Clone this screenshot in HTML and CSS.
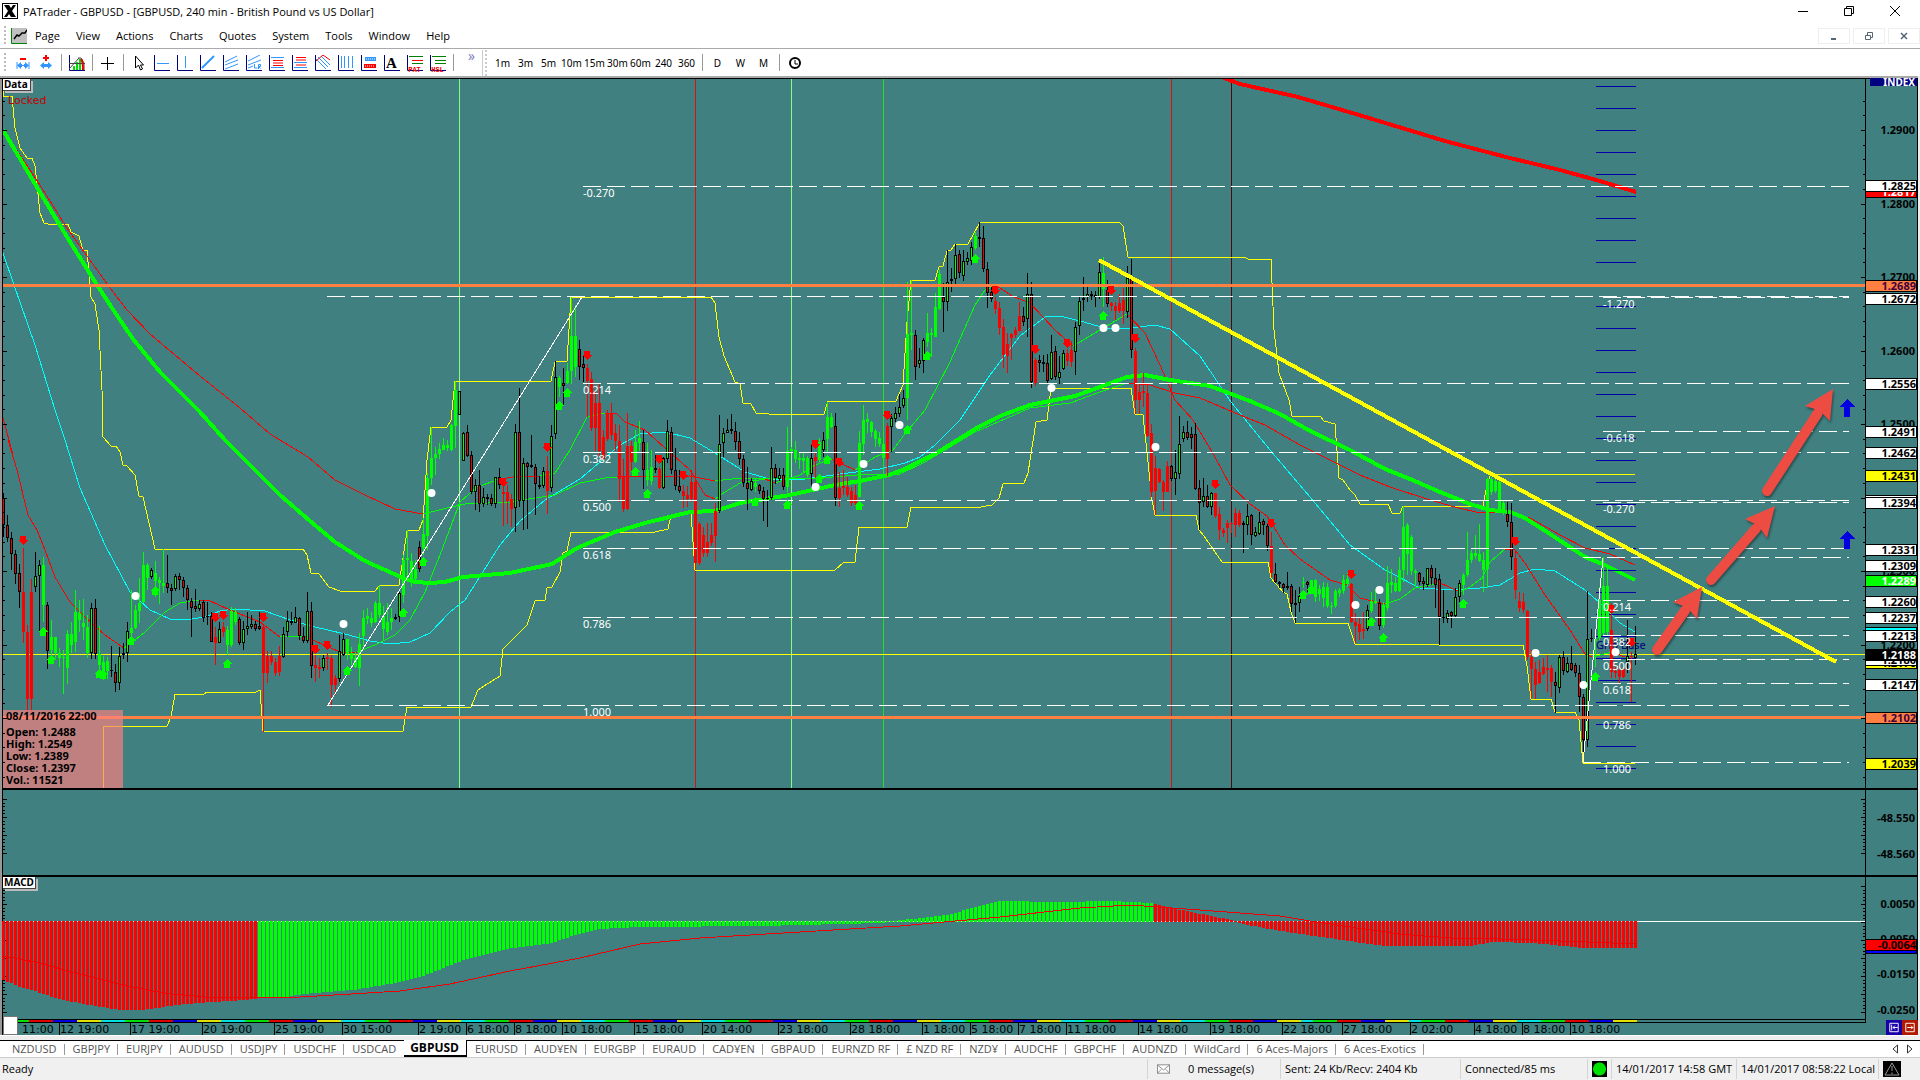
FILE: index.html
```
<!DOCTYPE html>
<html lang="en">
<head>
<meta charset="utf-8">
<title>PATrader - GBPUSD</title>
<link rel="stylesheet" href="styles.css">
</head>
<body>
<div class="app">
  <header class="titlebar">
    <svg class="logo" viewBox="0 0 16 16"><rect x=".5" y=".5" width="15" height="15" fill="#fff" stroke="#000"/><path d="M2 2h5l2 3 2-3h3l-4 6 4 6H9L7 11l-2 3H2l4-6z" fill="#000"/></svg>
    <h1 class="title">PATrader - GBPUSD - [GBPUSD, 240 min - British Pound vs US Dollar]</h1>
    <div class="window-buttons">
      <button class="win" aria-label="Minimize"><svg viewBox="0 0 12 12"><path d="M1 6.500h10"/></svg></button>
      <button class="win" aria-label="Restore"><svg viewBox="0 0 12 12"><path d="M1.500 3.500h7v7h-7zM3.500 3.500v-2h7v7h-2"/></svg></button>
      <button class="win" aria-label="Close"><svg viewBox="0 0 12 12"><path d="M1 1l10 10M11 1L1 11"/></svg></button>
    </div>
  </header>
  <nav class="menubar">
    <span class="grip"></span>
    <svg class="menu-icon" viewBox="0 0 16 16"><rect width="16" height="15" fill="#c0c0c0"/><path d="M.5 0v15.500H16" stroke="#008000" fill="none"/><path d="M3 11l3-4 2 1 3-3 3 0 2-3" stroke="#000" fill="none" stroke-width="1.500"/></svg>
    <button>Page</button><button>View</button><button>Actions</button><button>Charts</button><button>Quotes</button><button>System</button><button>Tools</button><button>Window</button><button>Help</button>
    <div class="mdi-buttons">
      <button aria-label="Minimize chart"><svg viewBox="0 0 10 10"><path d="M2 8h5" stroke-width="2"/></svg></button>
      <button aria-label="Restore chart"><svg viewBox="0 0 10 10"><path d="M1.500 4.500h5v4h-5zM3.500 4V1.500h5v5H7"/></svg></button>
      <button aria-label="Close chart"><svg viewBox="0 0 10 10"><path d="M2 2l6 6M8 2L2 8" stroke-width="1.500"/></svg></button>
    </div>
  </nav>
  <div class="toolbar">
    <span class="grip"></span>
    <button class="tool" aria-label="Zoom out"><svg viewBox="0 0 16 16"><path d="M5 4h6" stroke="#f00" stroke-width="2"/><path d="M2 10.500L6 7v2h1v3H6v2zM14 10.500L10 7v2H9v3h1v2z" fill="#3296ff"/><path d="M2 7v7M14 7v7M7 10.500h2" stroke="#3296ff"/></svg></button>
    <button class="tool" aria-label="Zoom in"><svg viewBox="0 0 16 16"><path d="M5 3h6M8 0v6" stroke="#f00" stroke-width="2"/><path d="M2 10.500L6 7v2h4V7l4 3.500L10 14v-2H6v2z" fill="#3296ff"/></svg></button>
    <span class="sep"></span>
    <button class="tool" aria-label="Profile"><svg viewBox="0 0 16 16"><path d="M.5 0v15.500H16" stroke="#000080" fill="none"/><path d="M4 15v-4h2v4zM7 15V7h2v8zM10 15V4h2v11z" fill="#00e000"/><path d="M0 14l10-11M0 8.500h16" stroke="#444" fill="none"/><path d="M9 3h3l3 5v7" stroke="#444" fill="none"/><path d="M12 4q2 2 2 11" stroke="#e00" fill="none" stroke-width="2"/></svg></button>
    <span class="sep"></span>
    <button class="tool" aria-label="Crosshair"><svg viewBox="0 0 16 16"><path d="M1 8.500h13M7.500 2v13" stroke="#000"/></svg></button>
    <span class="sep"></span>
    <button class="tool" aria-label="Select"><svg viewBox="0 0 16 16"><path d="M4.500 1v12l3-3 2 5 2-1-2-4h3z" fill="#fff" stroke="#000"/></svg></button>
    <button class="tool" aria-label="Horizontal line"><svg viewBox="0 0 16 16"><path class="ax" d="M.5 0v15.500H16"/><path class="bl" d="M3 8.500h12"/></svg></button>
    <button class="tool" aria-label="Vertical line"><svg viewBox="0 0 16 16"><path class="ax" d="M.5 0v15.500H16"/><path class="bl" d="M8.500 1v12"/></svg></button>
    <button class="tool" aria-label="Trend line"><svg viewBox="0 0 16 16"><path class="ax" d="M.5 0v15.500H16"/><path class="bl" d="M2 13L14 1" stroke-width="2"/></svg></button>
    <button class="tool" aria-label="Channel"><svg viewBox="0 0 16 16"><path class="ax" d="M.5 0v15.500H16"/><path class="bl" d="M2 7l12-6M2 10l13-5M2 14l13-5"/></svg></button>
    <button class="tool" aria-label="Regression"><svg viewBox="0 0 16 16"><path class="ax" d="M.5 0v15.500H16"/><path class="bl" d="M2 6l12-6M2 10l13-5M2 13l5-2M8.500 9v4h3M12.500 14V9.500h2v2h-2l2 2"/></svg></button>
    <button class="tool" aria-label="Retracement"><svg viewBox="0 0 16 16"><path class="ax" d="M.5 0v15.500H16"/><path class="bl" d="M2 2.500h13M2 12.500h13"/><path d="M4 5.500h10M4 8h10M4 10.500h10" stroke="#f00"/></svg></button>
    <button class="tool" aria-label="Extension"><svg viewBox="0 0 16 16"><path class="ax" d="M.5 0v15.500H16"/><path class="bl" d="M2 7.500h13M2 12.500h13"/><path d="M4 2.500h10M4 5h10M4 10h10" stroke="#f00"/></svg></button>
    <button class="tool" aria-label="Fan"><svg viewBox="0 0 16 16"><path class="ax" d="M.5 0v15.500H16"/><path class="bl" d="M1 4l10 10M3 2l10 10M6 1l9 9"/><path d="M1 6l7-6 7 5" stroke="#f00" fill="none"/></svg></button>
    <button class="tool" aria-label="Time zones"><svg viewBox="0 0 16 16"><path class="ax" d="M.5 0v15.500H16"/><path class="bl" d="M3.500 1v12M6.500 1v12M10.500 1v12M14.500 1v12"/></svg></button>
    <button class="tool" aria-label="Zones"><svg viewBox="0 0 16 16"><path class="ax" d="M.5 0v15.500H16"/><rect x="4" y="2" width="11" height="4" fill="#3296ff"/><rect x="3" y="9" width="12" height="4" fill="#f00"/><path d="M4 11h10M5 4h9" stroke="#fff" stroke-dasharray="1 1"/></svg></button>
    <button class="tool" aria-label="Text"><svg viewBox="0 0 16 16"><path class="ax" d="M.5 0v15.500H16"/></svg><b class="letter">A</b></button>
    <button class="tool" aria-label="Pattern"><svg viewBox="0 0 16 16"><path class="ax" d="M.5 0v15.500H16"/><path d="M2 1.500h14M5 8.500h11" stroke="#008000"/><path d="M5 5.500h11" stroke="#f00"/></svg><span class="tiny">PAT</span></button>
    <button class="tool" aria-label="Swing"><svg viewBox="0 0 16 16"><path class="ax" d="M.5 0v15.500H16"/><path d="M2 1.500h14M5 5.500h11M5 8.500h11" stroke="#008000"/></svg><span class="tiny">HSL</span></button>
    <span class="sep"></span>
    <button class="more" aria-label="More">»</button>
    <span class="grip tall"></span>
    <button class="tool">1m</button><button class="tool">3m</button><button class="tool">5m</button><button class="tool">10m</button><button class="tool">15m</button><button class="tool">30m</button><button class="tool">60m</button><button class="tool">240</button><button class="tool">360</button>
    <span class="sep"></span>
    <button class="tool">D</button><button class="tool">W</button><button class="tool">M</button>
    <span class="sep"></span>
    <button class="tool" aria-label="Clock"><svg viewBox="0 0 16 16"><circle cx="8" cy="8" r="5" fill="none" stroke="#000" stroke-width="2"/><path d="M8 5v4h3" fill="none" stroke="#000"/></svg></button>
  </div>
  <main class="workspace">
    <svg class="chart" id="chart" viewBox="0 76 1920 960" role="img" aria-label="GBPUSD 240 minute chart"></svg>
    <div class="nav-buttons">
      <button class="nav-blue" aria-label="Scroll to start"><svg viewBox="0 0 16 16"><path d="M3.500 3.500h9v9h-9zM5.500 5v6M12 8H7l2-2M7 8l2 2"/></svg></button>
      <button class="nav-red" aria-label="Scroll to end"><svg viewBox="0 0 16 16"><path d="M3.500 3.500h9v9h-9zM5 8h6L9 6M11 8l-2 2"/></svg></button>
    </div>
  </main>
  <nav class="tabs">
    <a href="#">NZDUSD</a><a href="#">GBPJPY</a><a href="#">EURJPY</a><a href="#">AUDUSD</a><a href="#">USDJPY</a><a href="#">USDCHF</a><a href="#" class="last">USDCAD</a><a href="#" class="active">GBPUSD</a><a href="#">EURUSD</a><a href="#">AUD¥EN</a><a href="#">EURGBP</a><a href="#">EURAUD</a><a href="#">CAD¥EN</a><a href="#">GBPAUD</a><a href="#">EURNZD RF</a><a href="#">£ NZD RF</a><a href="#">NZD¥</a><a href="#">AUDCHF</a><a href="#">GBPCHF</a><a href="#">AUDNZD</a><a href="#">WildCard</a><a href="#">6 Aces-Majors</a><a href="#">6 Aces-Exotics</a>
    <div class="tab-scroll"><button aria-label="Scroll tabs left"><svg viewBox="0 0 6 10"><path d="M5.500 1v8L1 5z"/></svg></button><button aria-label="Scroll tabs right"><svg viewBox="0 0 6 10"><path d="M.5 1v8L5 5z"/></svg></button></div>
  </nav>
  <footer class="status">
    <span class="ready">Ready</span>
    <span class="cell messages"><svg viewBox="0 0 14 10"><rect x=".5" y=".5" width="13" height="9" fill="#fff" stroke="#888"/><path d="M1 1l6 5 6-5M1 9l4-4M13 9L9 5" fill="none" stroke="#888"/></svg>0 message(s)</span>
    <span class="cell sent">Sent: 24 Kb/Recv: 2404 Kb</span>
    <span class="cell conn">Connected/85 ms</span>
    <span class="cell lamp"><i></i></span>
    <span class="cell gmt">14/01/2017 14:58 GMT</span>
    <span class="cell local">14/01/2017 08:58:22 Local</span>
    <span class="cell warn"><svg viewBox="0 0 18 16"><rect width="18" height="16" fill="#000"/><path d="M9 2l7 12H2zM9 5v5M9 11.500v1.500" fill="none" stroke="#999"/></svg></span>
  </footer>
</div>
<script src="script.js"></script>
</body>
</html>
```
FILE: styles.css
```
* { box-sizing: border-box; }
body { margin: 0; background: #fff; color: #000; font: 11px/16px "Open Sans", "Noto Sans", sans-serif; }
button { border: 0; background: none; padding: 0; font: inherit; color: inherit; }
svg { display: block; }
.app { display: flex; flex-direction: column; min-height: 100vh; }
.titlebar { display: flex; align-items: center; height: 22px; padding: 0 2px; }
.logo { width: 16px; height: 16px; margin-right: 5px; }
.title { margin: 0; font-size: 11px; font-weight: 400; line-height: 20px; padding-top: 2px; }
.window-buttons { display: flex; margin-left: auto; }
.win { display: grid; place-items: center; width: 46px; height: 22px; }
.win svg { width: 12px; height: 12px; fill: none; stroke: #000; }
.menubar { display: flex; align-items: center; height: 26px; padding: 2px 0 0 4px; gap: 16px; }
.grip { width: 2px; height: 20px; margin-right: 5px; background: repeating-linear-gradient(#bbb 0 2px, transparent 2px 4px); }
.menubar .grip { margin-right: -11px; }
.menu-icon { width: 16px; height: 16px; margin-right: -8px; }
.mdi-buttons { display: flex; margin-left: auto; gap: 3px; }
.mdi-buttons button { display: grid; place-items: center; width: 32px; height: 16px; border: 1px solid #eee; }
.mdi-buttons svg { width: 10px; height: 10px; fill: none; stroke: #567; }
.toolbar { display: flex; align-items: center; height: 28px; padding-left: 4px; border-top: 1px solid #aaa; }
.tool { display: grid; place-items: center; width: 23px; height: 24px; font: 10px/14px "Noto Sans", sans-serif; }
.tool svg { width: 16px; height: 16px; grid-area: 1 / 1; }
.ax { fill: none; stroke: #000080; }
.bl { fill: none; stroke: #3296ff; }
.letter, .tiny { grid-area: 1 / 1; }
.letter { font: bold 15px/16px "Liberation Serif", serif; }
.tiny { align-self: end; font: bold 7px/9px "Liberation Mono", monospace; color: #e00; }
.sep { width: 1px; height: 17px; margin: 0 3px 0 4px; background: #999; }
.more { width: 23px; margin-left: 3px; align-self: start; color: #77b; font-size: 14px; line-height: 14px; }
.grip.tall { height: 26px; border-left: 1px solid #ccc; width: 5px; margin: 0 4px 0 -1px; background: repeating-linear-gradient(#ccc 0 2px, transparent 2px 4px) right / 2px 100% no-repeat; }
.workspace { position: relative; }
.chart { width: 100%; height: auto; background: #408080; }
.chart text { font-family: "Noto Sans", sans-serif; font-size: 11px; white-space: pre; }
.chart .bold { font-weight: 700; }
.chart text.small { font-size: 10px; font-weight: 700; }
.chart .time { font-family: "DejaVu Sans", sans-serif; }
.chart .crisp { shape-rendering: crispEdges; }
.nav-buttons { position: absolute; right: 2px; bottom: 1px; display: flex; }
.nav-buttons button { width: 16px; height: 15px; }
.nav-buttons svg { width: 16px; height: 15px; fill: none; stroke: #fff; }
.nav-blue { background: #1800a8; }
.nav-red { background: #b01800; }
.tabs { display: flex; height: 22px; padding: 5px 0 0 4px; border-bottom: 1px solid #ccc; background: linear-gradient(#eee 0 4px, #000 4px 5px, #fff 5px); }
.tabs a { position: relative; padding: 0 8px; color: #555; text-decoration: none; white-space: nowrap; }
.tabs a::after { content: ""; position: absolute; right: 0; top: 3px; height: 11px; border-right: 1px solid #999; }
.tabs .last::after, .tabs .active::after { display: none; }
.tabs .active { margin-top: -1px; border: solid #000; border-width: 0 1px 2px 0; padding: 1px 7px 0 6px; line-height: 14px; background: #fff; color: #000; font-size: 12px; font-weight: 700; }
.tab-scroll { display: flex; gap: 9px; margin-left: auto; padding-right: 7px; }
.tab-scroll svg { width: 6px; height: 10px; fill: none; stroke: #333; }
.status { display: flex; align-items: center; flex: 1; min-height: 22px; padding: 0 19px 0 2px; background: #f0f0f0; line-height: 20px; }
.ready { flex: 1; }
.cell { display: flex; align-items: center; height: 20px; padding: 0 4px; border-left: 1px solid #d4d4d4; white-space: nowrap; }
.messages { width: 133px; gap: 18px; padding-left: 9px; }
.messages svg { width: 13px; height: 10px; }
.sent { width: 180px; }
.conn { width: 127px; }
.lamp { width: 24px; }
.gmt { width: 125px; }
.local { width: 142px; }
.lamp i { width: 17px; height: 16px; background: radial-gradient(circle, #00e000 0 6px, #000 7px); }
.warn svg { width: 18px; height: 16px; }
.warn { padding-right: 0; }
```
FILE: script.js
```
const chart = document.getElementById('chart');
const out = [];
const rect = (x, y, w, h, fill, extra = '') => out.push(`<rect x="${x}" y="${y}" width="${w}" height="${h}" fill="${fill}" ${extra}/>`);
const text = (x, y, s, fill, cls = '', anchor = 'start') => out.push(`<text x="${x}" y="${y}" fill="${fill}" class="${cls}" text-anchor="${anchor}">${s}</text>`);
const poly = (pts, stroke, w = 1, extra = '') => out.push(`<polyline points="${pts}" fill="none" stroke="${stroke}" stroke-width="${w}" ${extra}/>`);

// Bars: kind, high, body top, body bottom, low, in thirds of a pixel below the base.
// G/R are outlined up/down bars, g/r are solid trend bars.
const sessions = [
{ base: 440, first: 0, bars: `R 160 175 255 290;R 225 255 295 305;R 275 295 343 390;R 330 343 403 432;R 372 400 457 503;r 325 457 575 610;r 555 575 776 820;r 417 455 778 820;G 335 408 440 455;G 360 376 408 572;g 350 376 495 545;R 487 495 633 687;g 540 592 630 650;g 590 592 640 655;g 625 640 655 680;g 630 650 655 762;g 570 582 684 732;g 545 582 614 640;g 450 515 607 635;g 480 520 540 575;g 478 548 562 600;g 525 560 640 655;G 490 503 638 657;R 477 503 643 657;g 558 642 675 700;g 648 665 718 720;g 650 664 694 718;R 618 690 694 712;R 672 696 728 755;G 620 648 728 750;G 610 638 646 657;G 545 573 640 665;g 450 563 578 600;g 495 510 563 568;g 415 488 512 548;g 337 375 487 490;g 368 375 415 450;G 383 391 410 418;g 362 400 424 470;g 410 420 430 492;g 328 428 438 460;R 345 430 445 460;R 433 443 452 495;G 402 408 448 452;R 398 408 420 450;R 410 420 443 470;R 434 443 480 510;R 475 482 503 590;R 447 497 508 515;G 480 492 508 512;R 480 487 535 545;G 485 527 532 555;R 515 527 605 605;r 560 590 610 675;G 545 568 608 610;r 545 562 575 590;g 558 570 614 645;g 500 513 614 620;g 505 517 545 555;R 530 537 608 615;G 542 568 608 630;G 515 558 568 585;G 525 553 562 568;R 543 553 568 572;R 515 558 567 570;r 555 560 700 875;r 632 648 698 730;r 632 648 667 675;r 655 665 698 707;r 617 648 697 707;G 562 582 652 655;G 512 542 577 592;G 517 542 550 555;G 500 530 548 550;R 530 533 587 600;R 560 588 603 610;G 455 512 602 610;R 487 512 677 715;r 645 675 685 725;r 655 680 687 715;G 645 655 683 692;r 640 650 658 690;r 645 655 735 800;r 705 713 735 765;G 585 633 717 725;G 580 598 645 648;g 597 598 642 660;g 620 640 657 675;g 635 655 680 685;g 580 612 684 738;g 510 535 587 617;g 505 528 537 552;g 515 533 550 560;g 483 490 547 550;g 435 490 525 535;g 498 527 567 600;g 490 545 577 585;g 505 535 545 570;R 522 530 537 540;G 455 458 530 545;g 345 360 465 490;g 270 355 360 415;g 340 362 420 440;g 360 388 418 430;R 303 320 388 395;g 235 282 323 345;g 100 115 287 330;g -40 55 115 135;g 20 42 55 105;g 10 28 42 58;g -5 15 30 30;g 0 15 25 33;g -48 -46 29 32;g -176 -151 -43 24;G -146 -146 -76 -76;G -24 -20 62 62;R -46 -23 48 52` },
{ base: 240, first: 117, bars: `R 632 645 757 762;G 718 735 757 810;R 690 735 793 817;G 745 772 793 800;R 762 772 778 795;R 762 775 793 797;G 710 712 793 803;R 685 712 735 747;r 740 755 762 857;r 735 755 783 853;r 762 778 808 860;G 553 577 803 875;R 445 577 783 800;G 655 670 783 870;R 665 670 680 867;R 585 675 682 685;R 672 680 732 825;R 708 735 740 747;G 680 693 738 743;r 648 693 752 822;G 555 587 745 757;G 363 412 583 597;g 408 414 442 470;R 385 430 437 495;g 370 393 430 433;g 172 288 392 433;g 195 288 380 410;R 300 328 382 420;R 345 373 385 427;r 372 383 422 530;r 395 418 563 572;r 453 490 563 633;r 428 490 633 650;r 570 592 657 663;r 510 520 598 602;r 490 520 585 600;r 553 580 603 632;r 555 603 717 785;r 657 710 808 817;r 518 618 808 810;r 603 617 665 697;g 570 605 665 668;g 543 595 608 633;R 570 605 690 747;g 610 690 720 737;g 630 680 722 735;R 645 683 690 700;r 680 688 745 747;G 650 655 745 747;G 540 573 658 668;R 562 577 690 702;R 625 690 738 750;R 690 738 753 758;r 735 752 768 803;r 738 765 778 800;r 690 727 777 785;r 700 727 970 975;r 845 853 970 975;r 860 885 938 950;r 850 905 940 950;r 850 885 908 918;r 790 812 887 965;G 525 612 812 820;G 565 578 610 652;G 537 570 578 580;R 523 568 573 582;R 545 573 605 630;R 575 603 658 675;R 645 658 728 740;R 682 728 748 810;G 715 722 750 752;g 718 730 742 757;R 733 735 753 762;R 742 752 778 843;R 750 775 778 860;G 622 685 775 780;R 672 685 715 732;G 685 705 717 722;R 683 705 742 750;g 560 632 740 757;g 620 627 633 640;g 603 630 658 670;g 635 655 660 687;g 640 655 662 695;g 648 655 705 712;G 615 655 703 742;r 640 650 663 717;g 595 605 660 665;G 577 600 630 652;g 485 530 597 635;g 520 530 560 565;R 518 558 773 797;r 695 743 775 800;r 690 737 745 765;r 710 740 765 770;r 740 753 790 797;r 735 765 790 795;g 573 608 770 770;g 495 540 612 645;g 520 537 545 580;g 542 545 575 590;g 567 573 598 620;g 575 595 613 622;g 572 612 655 670` },
{ base: 200, first: 221, bars: `r 668 678 776 827;G 643 655 682 757;G 620 640 658 665;G 582 620 643 650;G 570 595 618 625;g 245 402 593 660;g 240 400 406 450;R 390 405 500 540;G 445 480 493 505;G 415 420 482 518;g 340 400 425 440;g 385 400 405 470;g 280 322 410 410;g 210 222 328 330;R 250 290 307 395;G 150 247 307 333;R 205 238 243 275;G 133 165 238 252;R 150 163 220 233;G 150 183 228 243;G 155 175 185 195;G 125 142 183 195;g 95 107 143 150;R 67 112 117 140;R 78 115 207 215;R 185 208 280 323;R 262 275 298 307;r 292 302 327 343;r 307 323 383 405;r 357 382 465 503;r 400 433 467 520;r 400 403 413 480;r 382 390 405 415;r 307 348 392 393;R 322 348 365 378;G 220 283 358 412;R 247 283 547 563;r 475 480 550 557;R 465 480 490 517;R 465 487 491 515;R 462 490 542 548;G 405 455 538 540;R 438 452 532 540;G 467 517 535 553;G 450 460 507 510;r 447 460 483 497;r 423 450 485 500;G 367 380 455 525;G 290 302 377 405;R 232 295 300 333;G 258 283 292 305;R 273 283 289 300;R 273 285 290 322;G 180 217 290 297;g 170 220 268 322;R 240 270 313 320;r 305 308 318 333;r 307 318 333 360;r 283 308 333 340;r 263 300 332 372;G 198 233 335 355;R 178 233 450 475;r 445 453 600 643;r 550 575 600 643;r 520 572 580 620;r 550 580 707 712;r 672 698 875 890;r 768 803 873 945;r 803 808 845 850;r 840 847 875 932;r 782 797 875 877;R 795 798 838 843;G 750 817 838 885;G 648 732 822 837;G 677 695 717 725;R 663 695 715 720;R 680 703 715 748;R 670 703 868 870;R 840 865 910 990;G 833 888 907 922;R 855 888 922 925;G 875 880 922 945;r 878 880 948 955;r 920 942 990 1020;r 985 990 1000 1010;r 960 968 985 1030;r 965 970 973 1000;r 925 940 975 1010;r 930 938 975 980` },
{ base: 400, first: 310, bars: `R 363 370 376 460;G 312 348 375 405;R 343 346 405 435;G 380 395 407 412;G 337 365 403 405;R 357 363 375 405;R 370 378 437 452;r 395 438 520 530;R 488 523 547 550;R 543 547 553 565;R 550 553 563 580;G 517 557 563 570;R 553 558 612 637;R 570 610 615 670;G 560 588 608 635;g 530 545 550 565;R 543 547 555 575;g 540 540 570 575;g 538 540 590 605;g 555 568 582 603;g 545 562 593 620;g 550 562 618 625;g 605 617 622 642;g 567 573 618 625;g 563 570 580 590;g 525 540 573 582;g 518 538 553 560;r 550 552 665 670;r 640 667 677 730;r 655 672 695 720;r 635 688 693 717;G 615 630 688 692;g 575 603 632 640;g 567 602 610 612;R 597 610 677 690;g 605 615 675 685;g 497 548 623 632;g 507 545 555 580;g 530 548 573 577;g 470 510 572 575;g 318 380 510 545;g 370 375 462 525;g 405 410 512 525;g 507 512 520 558;R 517 520 545 555;R 530 543 553 570;G 503 505 555 560;R 495 505 535 555;R 505 535 555 625;R 523 538 650 735;R 570 650 653 668;G 630 638 657 668;R 632 637 647 685;G 563 590 647 650;G 540 550 590 605;g 518 525 555 585;g 395 480 525 530;g 450 460 480 490;g 405 460 467 477;g 372 462 482 485;g 455 480 510 577;g 233 237 508 565;g 230 237 275 285;g 233 243 272 278;g 240 245 327 335;g 300 310 340 345;R 307 343 367 380;R 310 367 472 510;r 452 473 570 597;r 575 603 623 635;r 580 605 630 638;r 630 632 772 780;r 750 772 808 895;r 785 808 855 897;r 780 815 850 852;r 775 802 822 825;r 765 805 810 875;r 795 805 847 890;R 815 847 858 938;G 765 772 863 878;R 752 770 812 825;G 770 788 815 818;R 738 790 810 812;R 788 795 820 830;R 795 820 890 935;R 882 892 1020 1075;G 573 718 1020 1042;R 688 713 717 725;g 710 718 722 800;g 560 600 715 720;g 470 558 700 705;g 500 558 697 705;r 610 690 815 835;r 800 812 820 835;r 795 810 832 850;r 800 808 832 835;G 660 767 785 820;r 755 768 772 905;G 678 763 773 795` }
];

// Frame
rect(0, 76, 1920, 960, '#408080');
rect(0, 76, 2, 960, '#999'); rect(2, 78, 1, 958, '#000');
rect(0, 76, 1920, 2, '#aaa'); rect(0, 78, 1918, 1, '#000');
rect(1917, 78, 1, 958, '#000'); rect(1918, 76, 2, 960, '#eee');

out.push('<defs><clipPath id="plot"><rect x="3" y="79" width="1862" height="709"/></clipPath></defs>');
out.push('<g clip-path="url(#plot)" class="crisp">');
[[459, '#80ff80'], [695, '#d81010'], [791, '#80ff80'], [883, '#20e020'], [1171, '#d81010'], [1231, '#500808']].forEach(([x, c]) => rect(x, 79, 1, 709, c));
rect(3, 654, 1862, 1, '#ff0');

// Moving averages and channel
const yellow = '#ff0', lime = '#0f0', red = '#f00';
poly('3,90 3,96 12,96 15,128 20,148 27,158 32,158 35,166 37,184 40,213 44,223 48,224 68,224 71,232 79,236 83,250 87,250 91,297 95,304 99,330 102,390 103,437 111,446 116,446 120,452 123,465 127,466 135,475 139,496 143,497 155,549 303,549 307,555 311,573 319,574 329,587 340,591 375,591 379,586 399,585 407,531 419,530 423,520 427,460 431,427 447,427 451,420 455,381 551,381 555,362 567,361 571,297 711,297 715,303 719,337 724,356 735,382 740,384 743,403 751,404 756,413 769,414 824,414 828,401 896,401 903,385 907,322 911,280 935,280 939,267 943,266 947,251 951,250 955,244 968,244 973,235 980,222 1119,222 1123,226 1128,257 1244,257 1248,259 1271,259 1274,330 1279,373 1289,400 1292,416 1320,416 1324,421 1335,424 1339,478 1343,480 1350,490 1355,495 1360,504 1388,504 1392,513 1400,513 1403,506 1483,506 1487,485 1490,476 1500,474 1635,474', yellow);
poly('103,788 103,726 167,726 171,717 175,694 204,694 207,692 256,692 260,690 263,731 403,731 407,707 471,707 478,690 484,686 500,676 503,649 527,625 535,601 545,600 547,588 552,587 560,572 563,553 567,551 571,532 655,532 668,529 671,515 691,513 695,570 835,570 843,563 855,562 859,527 907,527 911,507 981,507 992,505 999,498 1003,484 1024,483 1028,473 1036,422 1047,420 1051,388 1131,388 1135,414 1143,415 1152,500 1155,515 1196,515 1199,530 1204,536 1222,562 1268,562 1271,578 1283,592 1287,594 1291,612 1295,623 1348,623 1355,644 1438,644 1439,645 1523,645 1527,666 1531,699 1551,699 1555,712 1575,712 1579,720 1583,763 1635,763', yellow);
poly('3,253 14,285 35,345 55,410 65,440 80,488 105,545 130,592 150,610 170,619 185,620 205,617 220,611 235,609 265,611 290,620 315,627 345,634 370,641 390,644 410,642 430,633 450,612 465,600 500,545 520,521 545,500 580,479 600,462 620,445 640,434 665,432 690,438 715,453 745,472 770,479 805,479 840,474 880,469 905,463 920,457 935,445 960,420 990,375 1020,336 1045,317 1060,316 1080,321 1105,328 1130,328 1155,325 1170,329 1200,356 1231,402 1270,450 1310,497 1350,545 1385,570 1420,588 1450,590 1480,588 1500,585 1520,573 1535,569 1555,571 1585,590 1600,603 1620,623 1635,632', '#0ff');
[[red, '8,440 17,470 28,515 37,530 45,550 55,577 70,602 85,617 105,635 124,648'], [lime, '124,648 131,643 145,632 165,612 180,603 199,600'], [red, '199,600 208,600 230,610 260,622 280,637'], [lime, '280,637 305,636'], [red, '305,636 315,641 340,652 357,652'], [lime, '357,652 375,645 395,635 410,620 425,592 440,555 460,502 477,487 500,479'], [red, '500,479 520,476 540,476'], [lime, '540,476 555,473 570,450 587,417 605,413'], [red, '605,413 617,414 625,422 645,430 665,448 690,470 705,495 715,499'], [lime, '715,499 725,492 740,483 765,479'], [red, '765,479 775,483'], [lime, '775,483 800,475 815,465 831,459'], [red, '831,459 855,470'], [lime, '855,470 875,457 893,450 904,435 925,410 950,362 975,305 985,290 992,287'], [red, '992,287 1000,288 1012,296 1030,303 1055,330 1073,346'], [lime, '1073,346 1100,330 1127,314'], [red, '1127,314 1145,333 1160,365 1175,400 1193,420 1215,457 1230,485 1250,504 1267,516 1285,545 1300,559 1330,580 1347,585 1360,598 1385,604'], [lime, '1385,604 1400,599 1415,588 1440,583'], [red, '1440,583 1460,592'], [lime, '1460,592 1470,587 1482,578 1490,562 1505,549'], [red, '1505,549 1515,550 1525,563 1545,595 1570,630 1585,654 1592,657'], [lime, '1592,657 1612,652'], [red, '1612,652 1625,657'],
[red, '3,418 13,455'], [red, '5,132 38,182 67,228 110,288 127,310 150,334 200,376 240,408 270,434 308,457 335,480 365,495 395,509 423,514'], [lime, '423,514 447,508 465,504 510,502 555,495 580,483 605,478 617,477'], [red, '617,477 690,476 715,481'], [lime, '715,481 740,478 820,478 870,474 900,474 925,462 975,432 1030,408 1070,403 1100,392 1127,383'], [red, '1127,383 1150,385 1175,393 1200,398 1240,415 1265,425 1300,445 1360,475 1390,487 1430,500 1455,507 1480,513 1500,512 1515,514 1530,518 1560,535 1585,548 1610,554 1635,565']].forEach(([c, p]) => poly(p, c));
poly('3,130 35,184 67,237 97,285 116,314 133,339 160,372 199,411 225,440 247,462 280,495 310,521 335,542 365,561 403,578 415,582 430,583 445,582 463,577 510,573 552,564 577,548 615,532 645,523 690,512 715,511 740,503 790,495 835,485 860,481 889,475 900,471 935,454 975,429 1000,416 1030,405 1075,396 1100,387 1127,377 1145,375 1170,380 1210,386 1250,401 1280,414 1310,431 1350,450 1385,469 1410,479 1440,492 1470,504 1490,510 1510,512 1525,518 1550,534 1585,557 1605,565 1635,580', lime, 4);
poly('1224,78 1240,84 1298,97 1359,115 1445,141 1506,157 1560,170 1600,181 1636,192', red, 4);

for (let y = 86; y < 780; y += 22) rect(1596, y, 40, 1, '#00a');
text(1596, 649, 'Grid Base', '#00007a');

for (const s of sessions) s.bars.split(';').forEach((bar, n) => {
  const [kind, ...v] = bar.split(' ');
  const [h, t, b, l] = v.map(d => Math.round(s.base + d / 3));
  const x = 3 + 4 * (s.first + n);
  const solid = kind === 'g' ? lime : kind === 'r' ? red : '#000';
  rect(x, h, 1, Math.max(1, l - h), solid);
  rect(x - 1, t, 3, Math.max(1, b - t), solid);
  if (solid === '#000' && b - t > 2) rect(x, t + 1, 1, b - t - 2, kind === 'G' ? lime : '#f00000');
});

// Retracement levels
[[186, 583], [296, 327], [383, 583], [452, 583], [500, 583], [548, 583], [617, 583], [705, 327], [297, 1603], [431, 1603], [502, 1603], [557, 1583], [600, 1603], [635, 1603], [659, 1603], [683, 1603], [762, 1583]].forEach(([y, x]) => poly(`${x},${y}.5 1849,${y}.5`, '#fff', 1, 'stroke-dasharray="18 6"'));
poly('328,705 582,297', '#fff'); poly('1583,762 1603,558', '#fff');
rect(3, 284, 1862, 3, '#ff8040'); rect(3, 716, 1862, 3, '#ff8040');
poly('1099,260 1836,662', yellow, 4);
const up = 'M0-5l5 5h-2v4h-6v-4h-2z', down = 'M0 5l5-5h-2v-4h-6v4h-2z';
const mark = (list, d, c) => list.forEach(([x, y]) => out.push(`<path d="${d}" transform="translate(${x} ${y})" fill="${c}"/>`));
mark([[23,540],[215,617],[223,615],[263,617],[315,649],[327,645],[503,482],[547,447],[587,355],[659,459],[683,475],[815,444],[839,462],[887,415],[995,290],[1035,349],[1067,343],[1111,290],[1135,338],[1215,484],[1271,523],[1351,574],[1515,541],[1611,609],[1631,642]], down, red);
mark([[43,632],[51,660],[99,674],[103,675],[131,641],[155,591],[227,664],[347,671],[403,613],[423,562],[559,406],[567,393],[635,472],[647,494],[755,502],[787,505],[819,479],[827,460],[859,506],[907,430],[927,356],[975,259],[1103,316],[1303,595],[1311,590],[1371,622],[1383,638],[1463,604],[1595,677]], up, lime);
mark([[1847,408],[1847,540]], 'M0-9l8 8h-5v10h-6v-10h-5z', '#0000e0');
out.push('</g>');
[[135,596],[343,624],[431,493],[815,487],[863,464],[899,425],[1051,388],[1103,328],[1115,328],[1155,447],[1355,605],[1379,590],[1535,653],[1583,685],[1615,652]].forEach(([x, y]) => out.push(`<circle cx="${x}.5" cy="${y}" r="4" fill="#fff"/>`));
[['-0.270',193],['0.214',390],['0.382',459],['0.500',507],['0.618',555],['0.786',624],['1.000',712]].forEach(([s, y]) => text(583, y + 4, s, '#fff'));
[['-1.270',304],['-0.618',438],['-0.270',509],['0.214',607],['0.382',642],['0.500',666],['0.618',690],['0.786',725],['1.000',769]].forEach(([s, y]) => text(1603, y + 4, s, '#fff'));

// Forecast arrows: tail, tip and the two corners of the head
[[1657,650,1702,587,1673,602,1697,619],[1711,580,1775,506,1745,519,1767,538],[1767,491,1833,389,1805,406,1830,421]].forEach(([ax, ay, tx, ty, lx, ly, rx, ry]) => {
  const mx = (lx + rx) / 2 , my = (ly + ry) / 2;
  out.push(`<g filter="drop-shadow(1px 2px 1px #0006)"><path d="M${ax} ${ay}L${mx} ${my}" stroke="#ed4c43" stroke-width="10" stroke-linecap="round"/><path d="M${tx} ${ty}L${lx} ${ly}L${mx + (tx - mx) / 8} ${my + (ty - my) / 8}L${rx} ${ry}z" fill="#ed4c43"/></g>`);
});

// Session read-out
rect(3, 710, 120, 78, '#ff8080', 'fill-opacity=".68"');
['08/11/2016 22:00', 'Open: 1.2488', 'High: 1.2549', 'Low: 1.2389', 'Close: 1.2397', 'Vol.: 11521'].forEach((s, n) => text(6, (n ? 724 + 12 * n : 720), s, '#000', 'bold'));
text(8, 104, 'Locked', '#c00000', 'time');

// Panels and axes
out.push('<g class="crisp">');
rect(2, 788, 1915, 2, '#000'); rect(2, 875, 1915, 2, '#000'); rect(1865, 79, 1, 943, '#000');
const tick = (y, major) => { rect(3, y, major ? 4 : 2, 1, '#000'); rect(major ? 1861 : 1863, y, major ? 4 : 2, 1, '#000'); };
for (let n = -2; n < 45; n++) tick(Math.round(130 + n * 14.7), n % 5 === 0);
for (let n = 0; n < 16; n++) tick(Math.round(799 + n * 3.6), n % 5 === 0);
for (let n = 0; n < 36; n++) tick(Math.round(886 + n * 3.6), n % 5 === 0);

// MACD histogram, interpolated between its turning points
rect(3, 921, 1862, 1, '#fff');
const hist = [[0,978],[16,985],[39,992],[61,999],[82,1003],[118,1009],[141,1009],[155,1007],[184,1003],[212,1001],[245,999],[257,997],[278,997],[302,993],[351,989],[388,983],[424,974],[465,958],[510,947],[551,942],[576,933],[596,928],[640,926],[760,925],[880,922],[910,919],[950,914],[980,905],[1000,901],[1060,902],[1110,901],[1150,903],[1170,908],[1200,914],[1230,920],[1240,923],[1280,930],[1320,936],[1382,945],[1468,945],[1492,941],[1533,942],[1582,947],[1640,947]];
for (let x = 2; x < 1636; x += 4) {
  const k = hist.findIndex(p => p[0] > x), [x0, y0] = hist[k - 1], [x1, y1] = hist[k];
  const y = Math.round(y0 + (y1 - y0) * (x - x0) / (x1 - x0));
  rect(x, Math.min(921, y), 3, Math.abs(y - 921) + 1, x < 258 || x > 1152 ? red : lime);
}
poly('3,956 40,963 61,969 118,984 163,993 204,997 300,997 351,994 400,991 450,984 510,971 580,958 640,944 700,938 800,932 900,926 1000,917 1080,908 1130,905 1200,910 1280,916 1310,921 1350,927 1400,934 1450,938 1500,939 1560,941 1637,944', '#f00000');

// Time scale
rect(2, 1019, 1864, 1, '#000'); rect(2, 1022, 1864, 1, '#000');
const bands = ['#00e000', '#e00000', '#0000e0', '#e0e000', '#00e0e0'];
let bx = 5;
for (let n = 0; bx < 1637; n++) { const w = bx === 1301 || bx === 1409 ? 12 : 24; rect(bx, 1020, w, 2, bands[n % 5]); bx += w; }
const times = [[60,'12 19:00'],[131,'17 19:00'],[203,'20 19:00'],[275,'25 19:00'],[343,'30 15:00'],[419,'2 19:00'],[467,'6 18:00'],[515,'8 18:00'],[563,'10 18:00'],[635,'15 18:00'],[703,'20 14:00'],[779,'23 18:00'],[851,'28 18:00'],[923,'1 18:00'],[971,'5 18:00'],[1019,'7 18:00'],[1067,'11 18:00'],[1139,'14 18:00'],[1211,'19 18:00'],[1283,'22 18:00'],[1343,'27 18:00'],[1411,'2 02:00'],[1475,'4 18:00'],[1523,'8 18:00'],[1571,'10 18:00']];
times.forEach(([x]) => rect(x - 1, 1023, 1, 12, '#000'));
rect(3, 1016, 14, 18, '#fff', 'stroke="#777"');
rect(0, 1035, 1920, 1, '#fff');
out.push('</g>');
text(22, 1033, '11:00', '#000', 'time');
times.forEach(([x, s]) => text(x, 1033, s, '#000', 'time'));

// Price labels
[['1.2900',130],['1.2800',204],['1.2700',277],['1.2600',351],['1.2500',424],['1.2300',571],['1.2200',645],['-48.550',818],['-48.560',854],['0.0050',904],['-0.0050',939],['-0.0150',974],['-0.0250',1010]].forEach(([s, y]) => text(1915, y + 4, s, '#000', 'bold', 'end'));
const box = (s, y, fill, ink) => {
  rect(1866, y - 6, 51, 12, '#000'); rect(1866, y - 5, 50, 10, fill);
  text(1916, y + 4, s, ink, 'bold', 'end');
};
[['1.2817',192,'#f00','#fff'],['1.2825',186,'#fff','#000'],['1.2689',286,'#ff8040','#400040'],['1.2672',299,'#fff','#000'],['1.2556',384,'#fff','#000'],['1.2491',432,'#fff','#000'],['1.2462',453,'#fff','#000'],['1.2431',476,'#ff0','#000'],['',501,'#fff','#000'],['1.2394',503,'#fff','#000'],['1.2331',550,'#fff','#000'],['1.2309',566,'#fff','#000'],['1.2289',581,'#0f0','#fff'],['1.2260',602,'#fff','#000'],['1.2237',618,'#fff','#000'],['',633,'#0ff','#000'],['1.2213',636,'#fff','#000'],['1.2176',663,'#ff0','#000'],['1.2180',660,'#fff','#000'],['1.2188',655,'#000','#fff'],['1.2147',685,'#fff','#000'],['1.2102',718,'#ff8040','#400040'],['1.2039',764,'#ff0','#000'],['',948,'#00f','#000'],['-0.0064',945,'#f00','#000']].forEach(b => box(...b));
rect(1870, 78, 47, 8, '#000080'); text(1915, 86, 'INDEX', '#fff', 'small', 'end');
[['Data', 3, 79, 28], ['MACD', 3, 877, 33]].forEach(([s, x, y, w]) => {
  rect(x + 2, y + 2, w, 12, '#bbb'); rect(x, y, w, 12, '#444'); rect(x, y, w - 1, 11, '#fff'); text(x + 1, y + 9, s, '#000', 'small');
});
chart.innerHTML = out.join('');
```
